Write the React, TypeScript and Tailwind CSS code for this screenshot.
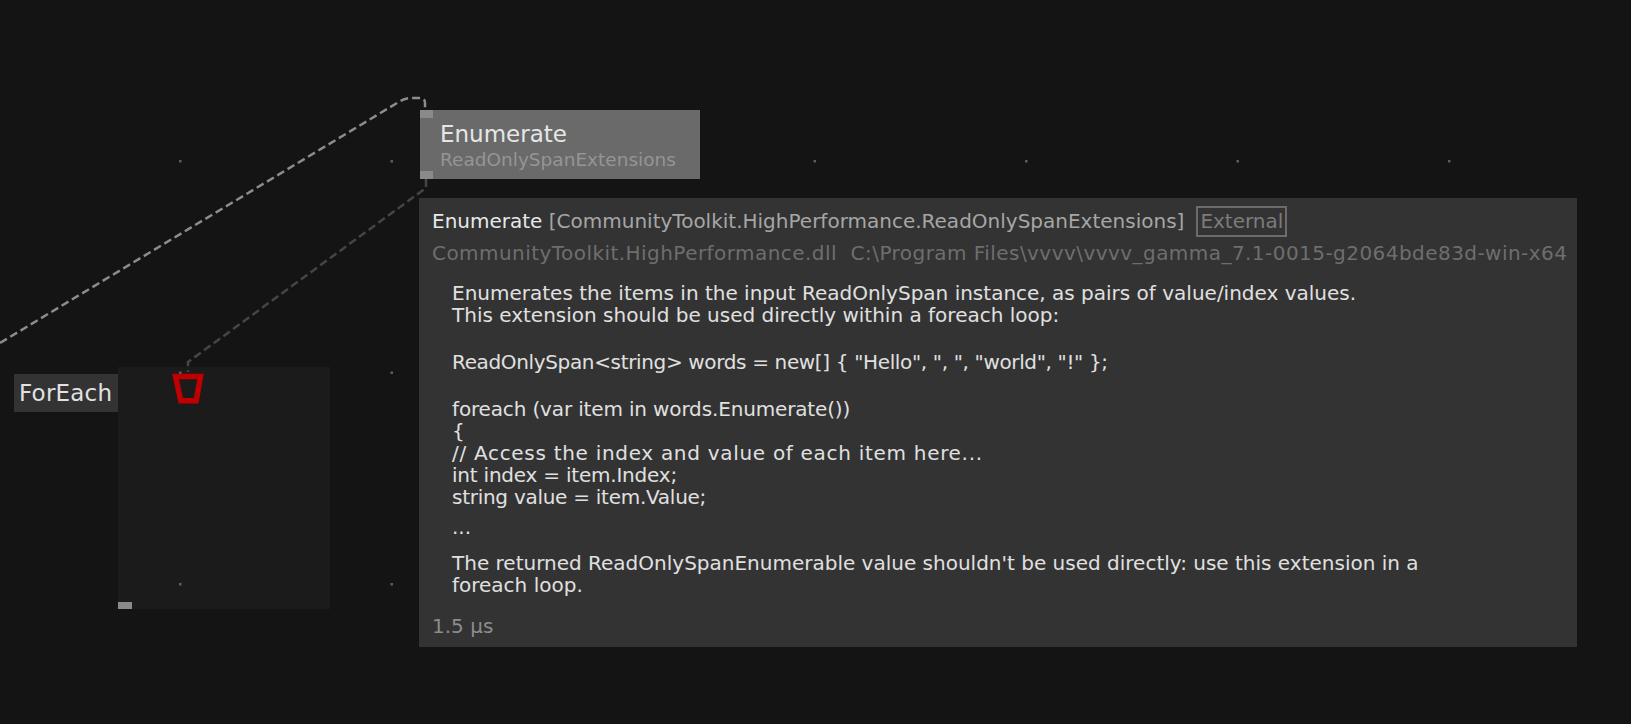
import React from "react";

const gridX = [180, 391.5, 603, 814.5, 1026, 1237.5, 1449];
const gridY = [161, 372.5, 584];

// text + per-line tracking to follow the reference widths
const codeLines: [string, string][] = [
  ["foreach (var item in words.Enumerate())", "tracking-[-0.15px]"],
  ["{", ""],
  ["// Access the index and value of each item here...", "tracking-[0.7px]"],
  ["int index = item.Index;", "tracking-[-0.22px]"],
  ["string value = item.Value;", "tracking-[-0.27px]"],
];

function Canvas() {
  return (
    <svg className="absolute inset-0" width={1631} height={724}>
      {gridY.map((y) =>
        gridX.map((x) => (
          <rect key={x + "-" + y} x={x - 1} y={y - 1} width={2.5} height={2.5} fill="#5e5e5e" />
        ))
      )}
      {/* link into Enumerate */}
      <path
        d="M0 343 L397 103 Q404 98 412 98 L420 98 Q425 98 425 103 L425 110"
        fill="none"
        stroke="#8c8c8c"
        strokeWidth={2.5}
        strokeDasharray="8 4"
      />
      {/* link out of Enumerate into ForEach */}
      <path
        d="M426 179 L426 188 L188 362 L188 372"
        fill="none"
        stroke="#454545"
        strokeWidth={2.5}
        strokeDasharray="8 4"
      />
      <polygon
        points="175.5,376.5 200.5,376.5 196.2,400.8 180.8,400.8"
        fill="none"
        stroke="#c00000"
        strokeWidth={5.5}
      />
    </svg>
  );
}

export default function App() {
  return (
    <div className="relative w-[1631px] h-[724px] overflow-hidden bg-[#141414] font-['DejaVu_Sans',sans-serif]">
      {/* ForEach region */}
      <div className="absolute left-[118px] top-[367px] w-[212px] h-[242px] bg-[#1b1b1b]">
        <div className="absolute left-0 bottom-0 w-[14px] h-[7px] bg-[#8a8a8a]" />
      </div>
      <div className="absolute left-[14px] top-[374px] w-[104px] h-[38px] bg-[#333333] pl-[5px] text-[23px] leading-[38px] tracking-[0.2px] text-[#e2e2e2]">
        ForEach
      </div>

      <Canvas />

      {/* Enumerate node */}
      <div className="absolute left-[420px] top-[110px] w-[280px] h-[69px] bg-[#6a6a6a] pl-[20px] pt-[12px]">
        <div className="absolute left-0 top-0 w-[13px] h-[8px] bg-[#8a8a8a]" />
        <div className="absolute left-0 bottom-0 w-[13px] h-[8px] bg-[#8a8a8a]" />
        <div className="text-[23px] leading-[24px] text-[#e6e6e6]">Enumerate</div>
        <div className="mt-[2px] text-[18.5px] leading-[24px] text-[#959595]">ReadOnlySpanExtensions</div>
      </div>

      {/* Tooltip */}
      <div className="absolute left-[419px] top-[198px] w-[1158px] h-[449px] bg-[#333333] pl-[13px] pt-[7px]">
        <div className="flex items-center text-[20px] leading-[32px] whitespace-pre">
          <span className="text-[#e8e8e8]">Enumerate </span>
          <span className="text-[#a6a6a6]">[CommunityToolkit.HighPerformance.ReadOnlySpanExtensions]</span>
          <span className="ml-[12px] border-2 border-[#6c6c6c] px-[2px] leading-[27px] text-[#7c7c7c]">External</span>
        </div>
        <div className="text-[20px] leading-[32px] tracking-[0.45px] whitespace-pre text-[#6e6e6e]">
          {"CommunityToolkit.HighPerformance.dll  C:\\Program Files\\vvvv\\vvvv_gamma_7.1-0015-g2064bde83d-win-x64"}
        </div>

        <div className="mt-[13px] pl-[20px] text-[20px] leading-[22px] text-[#e0e0e0]">
          <p>
            Enumerates the items in the input ReadOnlySpan instance, as pairs of value/index values.
            <br />
            This extension should be used directly within a foreach loop:
          </p>
          <p className="mt-[25px] tracking-[-0.35px]">
            {'ReadOnlySpan<string> words = new[] { "Hello", ", ", "world", "!" };'}
          </p>
          <div className="mt-[25px]">
            {codeLines.map(([text, cls]) => (
              <div key={text} className={cls}>
                {text}
              </div>
            ))}
            <div className="mt-[8px]">...</div>
          </div>
          <p className="mt-[14px]">
            The returned ReadOnlySpanEnumerable value shouldn't be used directly: use this extension in a
            <br />
            foreach loop.
          </p>
        </div>
        <div className="mt-[19px] text-[20px] leading-[22px] text-[#8c8c8c]">1.5 µs</div>
      </div>
    </div>
  );
}
